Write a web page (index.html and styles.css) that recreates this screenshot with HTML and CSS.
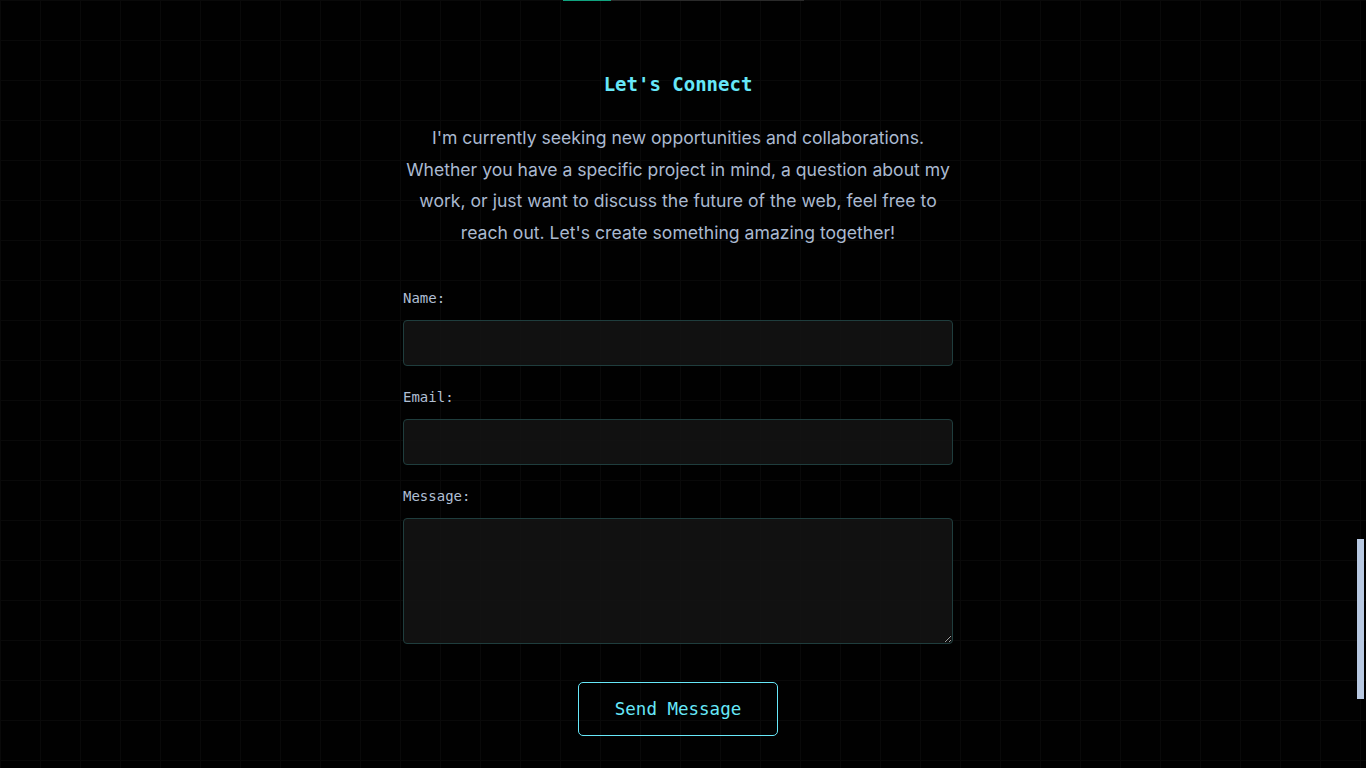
FILE: index.html
```html
<!DOCTYPE html>
<html lang="en">
<head>
<meta charset="utf-8">
<title>Let's Connect</title>
<link rel="stylesheet" href="styles.css">
</head>
<body>
  <div class="progress"><div class="progress-fill"></div></div>
  <main class="page">
    <section class="contact">
      <h2 class="title">Let's Connect</h2>
      <p class="intro">I'm currently seeking new opportunities and collaborations. Whether you have a specific project in mind, a question about my work, or just want to discuss the future of the web, feel free to reach out. Let's create something amazing together!</p>
      <form class="form">
        <div class="field">
          <label class="label" for="name">Name:</label>
          <input class="input" id="name" type="text">
        </div>
        <div class="field">
          <label class="label" for="email">Email:</label>
          <input class="input" id="email" type="email">
        </div>
        <div class="field">
          <label class="label" for="message">Message:</label>
          <textarea class="input textarea" id="message"></textarea>
        </div>
        <div class="actions">
          <button class="btn" type="button">Send Message</button>
        </div>
      </form>
    </section>
  </main>
  <div class="scroll-thumb"></div>
</body>
</html>
```

FILE: styles.css
```css
* { box-sizing: border-box; }
html, body { margin: 0; padding: 0; }
body {
  background-color: #010101;
  background-image:
    linear-gradient(to right, #090909 1px, transparent 1px),
    linear-gradient(to bottom, #090909 1px, transparent 1px);
  background-size: 40px 40px;
  background-position: 0 0;
  min-height: 768px;
  overflow: hidden;
  font-family: "Inter", "Noto Sans", sans-serif;
  color: #a9b8cf;
}
.progress {
  width: 241px;
  height: 1px;
  margin: 0 auto;
  background: #2a2a2a;
}
.progress-fill {
  width: 48px;
  height: 1px;
  background: #10a37f;
}
.page {
  padding-right: 10px;
}
.contact {
  width: 550px;
  margin: 0 auto;
  display: flex;
  flex-direction: column;
  align-items: center;
}
.title {
  margin: 71px 0 0;
  font-family: "DejaVu Sans Mono", "Liberation Mono", monospace;
  font-size: 19px;
  line-height: 24px;
  font-weight: bold;
  color: #67e8f9;
}
.intro {
  margin: 26px 0 0;
  font-size: 17.6px;
  line-height: 31.6px;
  text-align: center;
  color: #aab9d0;
}
.form {
  width: 550px;
  margin-top: 40px;
  display: flex;
  flex-direction: column;
}
.field {
  display: flex;
  flex-direction: column;
  margin-bottom: 21px;
}
.label {
  font-family: "DejaVu Sans Mono", "Liberation Mono", monospace;
  font-size: 14px;
  line-height: 21px;
  margin-bottom: 11px;
  color: #b0bfd4;
}
.input {
  display: block;
  width: 100%;
  height: 46px;
  background: rgba(20, 20, 20, 0.85);
  border: 1px solid #1f3d3d;
  border-radius: 4px;
  color: #cbd5e1;
  font-family: "DejaVu Sans Mono", monospace;
  font-size: 14px;
  padding: 10px 12px;
  outline: none;
}
.textarea {
  height: 126px;
  resize: vertical;
}
.actions {
  display: flex;
  justify-content: center;
  margin-top: 17px;
}
.btn {
  width: 200px;
  height: 54px;
  background: transparent;
  border: 1px solid #67e8f9;
  border-radius: 5px;
  color: #67e8f9;
  font-family: "DejaVu Sans Mono", "Liberation Mono", monospace;
  font-size: 17.5px;
  cursor: pointer;
}
.scroll-thumb {
  position: fixed;
  left: 1357px;
  top: 539px;
  width: 7px;
  height: 160px;
  background: #b8c9e2;
}
```
